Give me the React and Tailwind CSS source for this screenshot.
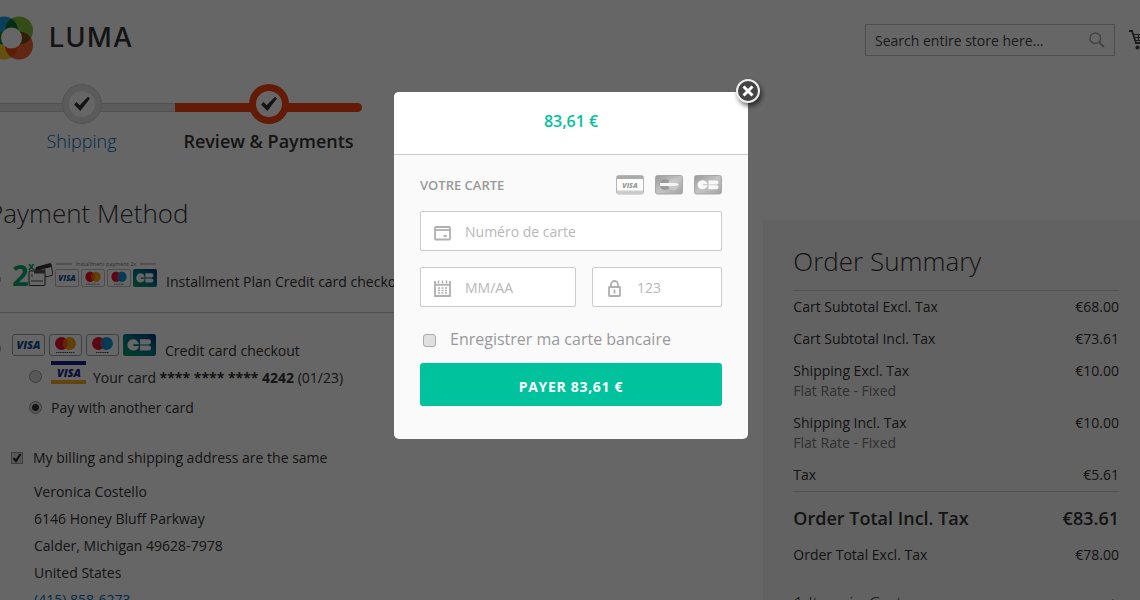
import clsx from 'clsx';

const totals = [
  { label: 'Cart Subtotal Excl. Tax', value: '€68.00' },
  { label: 'Cart Subtotal Incl. Tax', value: '€73.61' },
  { label: 'Shipping Excl. Tax', note: 'Flat Rate - Fixed', value: '€10.00' },
  { label: 'Shipping Incl. Tax', note: 'Flat Rate - Fixed', value: '€10.00' },
  { label: 'Tax', value: '€5.61' },
];

const address = ['Veronica Costello', '6146 Honey Bluff Parkway', 'Calder, Michigan 49628-7978', 'United States'];

const radioClass =
  'h-[13px] w-[13px] shrink-0 appearance-none rounded-full border border-[#999] bg-[#ddd] checked:bg-[radial-gradient(circle,#333_0,#333_3px,#ddd_4px)]';

const fieldClass =
  'flex h-10 min-w-0 items-center gap-3.5 rounded-[2px] border border-[#ccc] bg-white pl-[13px] pr-2 text-[#b0b0b0]';

const fieldInputClass =
  'w-full min-w-0 bg-transparent pt-0.5 text-sm text-[#555] outline-none placeholder:text-[#b8b8b8]';

function Logo() {
  return (
    <a href="#" className="flex items-center gap-[15px] pl-px text-[#333]" aria-label="Luma">
      <svg width="45" height="44" viewBox="0 0 45 44" className="isolate">
        <circle cx="15" cy="14.500" r="14" fill="#1b9fdc" className="mix-blend-multiply" />
        <circle cx="30" cy="14.500" r="14" fill="#84bd3c" className="mix-blend-multiply" />
        <circle cx="15" cy="29.500" r="14" fill="#f5c72c" className="mix-blend-multiply" />
        <circle cx="30" cy="29.500" r="14" fill="#f0622f" className="mix-blend-multiply" />
        <circle cx="22.500" cy="22" r="10.500" fill="#fff" />
      </svg>
      <span className="font-['Inter'] text-[27px] leading-8 font-medium tracking-wider">LUMA</span>
    </a>
  );
}

function Step({ label, active }) {
  return (
    <li className="flex w-[187px] flex-col items-center">
      <div className="grid w-full items-center justify-items-center">
        <div
          className={clsx(
            'col-start-1 row-start-1 mt-1.5 h-[9px] w-full',
            active ? 'rounded-r-full bg-[#f84310]' : 'border-y border-[#ccc] bg-[#e4e4e4]'
          )}
        />
        <span
          className={clsx(
            'col-start-1 row-start-1 flex h-10 w-10 items-center justify-center rounded-full',
            active ? 'bg-[#f84310]' : 'border border-[#ccc] bg-[#e4e4e4]'
          )}
        >
          <span className="flex h-[26px] w-[26px] items-center justify-center rounded-full bg-white">
            <svg width="18" height="16" viewBox="0 0 18 16">
              <path d="M1 8.500 3.500 6l3.200 3.200L15 .8l2 1.600L7.300 15z" fill="#333" />
            </svg>
          </span>
        </span>
      </div>
      <span className={clsx('mt-[3px] text-lg leading-7', active ? 'font-semibold text-[#333]' : 'font-light text-[#006bb4]')}>
        {label}
      </span>
    </li>
  );
}

function CardBadge({ type, small }) {
  return (
    <svg width={small ? 24 : 33} height={small ? 18 : 22} viewBox="0 0 33 22" preserveAspectRatio="none" className="shrink-0">
      <defs>
        <linearGradient id="cbFill" x1="0" y1="1" x2="1" y2="0">
          <stop offset="0" stopColor="#0f9a5e" />
          <stop offset=".5" stopColor="#04768a" />
          <stop offset="1" stopColor="#023a7a" />
        </linearGradient>
      </defs>
      {type !== 'cb' && <rect x=".5" y=".5" width="32" height="21" rx="2.500" fill="#fff" stroke="#a0a0a0" />}
      {type === 'visa' && (
        <text x="16.500" y="15" textAnchor="middle" fontFamily="Open Sans, sans-serif" fontSize="11" fontWeight="800" fontStyle="italic" fill="#0a4f94">
          VISA
        </text>
      )}
      {(type === 'mastercard' || type === 'maestro') && (
        <g>
          <circle cx="12.500" cy="9.500" r="6.500" fill="#e8112d" />
          <circle cx="20.500" cy="9.500" r="6.500" fill={type === 'maestro' ? '#0a97dd' : '#f79e1b'} />
          <path d="M16.500 4.400a6.500 6.500 0 0 1 0 10.200 6.500 6.500 0 0 1 0-10.200z" fill={type === 'maestro' ? '#6b63b0' : '#ff5f00'} />
          <path d={type === 'maestro' ? 'M10 18.500h13' : 'M7 18.500h19'} stroke="#444" strokeDasharray="1.500 .6" />
        </g>
      )}
      {type === 'cb' && (
        <g>
          <rect width="33" height="22" rx="2.500" fill="url(#cbFill)" />
          <path d="M16 10.300h-5.500v1.600H16a5.800 5.800 0 0 1-6 4.600 5.600 5.600 0 0 1 0-11.200 5.800 5.800 0 0 1 6 5z" fill="#fff" />
          <path d="M17 5.300h8.500a2.500 2.500 0 0 1 0 5.100H17zM17 11.500h8.500a2.500 2.500 0 0 1 0 5H17z" fill="#fff" />
        </g>
      )}
    </svg>
  );
}

function InstallmentBadge() {
  return (
    <span className="flex items-end gap-0.5">
      <svg width="41" height="28" viewBox="0 0 41 28">
        <text x="0" y="25" fontFamily="Open Sans, sans-serif" fontSize="29" fontWeight="700" fill="#0aa66c">
          2
        </text>
        <path d="M26 6 39 3l2 11-7 2z" fill="#fff" stroke="#444" />
        <path d="M24 6 38.500 2l.7 4L23 10z" fill="#333" />
        <rect x="17" y="10" width="16" height="14.500" rx="1" fill="#fff" stroke="#333" />
        <path d="M22 8.500h12l-2 4H22z" fill="#555" />
        <path d="M20 13v3M19 20h12" stroke="#555" />
        <text x="16" y="9" fontFamily="Open Sans, sans-serif" fontSize="11" fontWeight="700" fill="#0aa66c">
          x
        </text>
      </svg>
      <span className="flex flex-col gap-0.5">
        <svg width="102" height="6" viewBox="0 0 102 6">
          <path d="M1 3h16" stroke="#999" />
          <path d="M85 3h16" stroke="#c88" />
          <text x="51" y="5" textAnchor="middle" fontFamily="Open Sans, sans-serif" fontSize="5.500" fill="#777">
            Installment payment 2x
          </text>
        </svg>
        <span className="flex gap-0.5 pb-0.5">
          <CardBadge type="visa" small />
          <CardBadge type="mastercard" small />
          <CardBadge type="maestro" small />
          <CardBadge type="cb" small />
        </span>
      </span>
    </span>
  );
}

function VisaCard() {
  return (
    <svg width="35" height="23" viewBox="0 0 35 23" className="shrink-0">
      <rect width="35" height="23" fill="#fff" />
      <rect width="35" height="4" fill="#1a1f8a" />
      <rect y="19" width="35" height="4" fill="#f7a823" />
      <text x="18" y="15.500" textAnchor="middle" fontFamily="Open Sans, sans-serif" fontSize="11" fontWeight="800" fontStyle="italic" fill="#1a1f8a">
        VISA
      </text>
    </svg>
  );
}

function GreyCard({ type }) {
  return (
    <svg width="28" height="20" viewBox="0 0 28 20">
      <defs>
        <linearGradient id="greyFill" x1="0" y1="0" x2="1" y2="1">
          <stop offset="0" stopColor="#999" />
          <stop offset=".5" stopColor="#c4c4c4" />
          <stop offset="1" stopColor="#a3a3a3" />
        </linearGradient>
      </defs>
      {type === 'visa' && (
        <g>
          <rect x=".5" y=".5" width="27" height="18.500" rx="2" fill="#fdfdfd" stroke="#b5b5b5" />
          <path d="M1 1h26v3H1z" fill="#aaa" />
          <path d="M1 15.500h26V19H1z" fill="#ccc" />
          <text x="14" y="12.500" textAnchor="middle" fontFamily="Open Sans, sans-serif" fontSize="7" fontWeight="800" fontStyle="italic" fill="#999">
            VISA
          </text>
        </g>
      )}
      {type !== 'visa' && <rect x=".5" y=".5" width="27" height="18.500" rx="2" fill="url(#greyFill)" stroke="#a8a8a8" />}
      {type === 'mastercard' && (
        <g>
          <circle cx="10" cy="9.500" r="5.500" fill="#999" />
          <circle cx="18.500" cy="9.500" r="5.500" fill="#c8c8c8" />
          <path d="M5 8h16l3 1.500-3 1.500H5z" fill="#f4f4f4" />
        </g>
      )}
      {type === 'cb' && (
        <g fill="#fafafa">
          <path d="M13.500 9.200H9v1h4.500a5 4.500 0 1 1 0-1z" />
          <path d="M14.500 5.500h8a2 2 0 0 1 0 4h-8zM14.500 10.300h8a2 2 0 0 1 0 4h-8z" />
        </g>
      )}
    </svg>
  );
}

function CardIcon() {
  return (
    <svg width="17" height="15" viewBox="0 0 17 15" className="mt-1 shrink-0" fill="none" stroke="currentColor">
      <rect x="1" y="1" width="15" height="12.500" rx="1" strokeWidth="1.800" />
      <path d="M1 4h15" strokeWidth="1.800" />
      <path d="M9.500 10h3.500" strokeWidth="1.800" />
    </svg>
  );
}

function CalendarIcon() {
  return (
    <svg width="17" height="17" viewBox="0 0 17 17" className="mt-0.5 shrink-0" fill="none" stroke="currentColor">
      <path d="M1 1v15h15V1" strokeWidth="1.800" />
      <path d="M1 4.800h15" strokeWidth="1.800" />
      <path d="M4.500 .5v3M8.500 .5v3M12.500 .5v3" strokeWidth="1.500" />
      <path d="M4 8h2M7.500 8h2M11 8h2M4 10.500h2M7.500 10.500h2M11 10.500h2M4 13h2M7.500 13h2M11 13h2" strokeWidth="1.300" />
    </svg>
  );
}

function LockIcon() {
  return (
    <svg width="13" height="17" viewBox="0 0 13 17" className="mx-0.5 mt-0.5 shrink-0" fill="none" stroke="currentColor">
      <rect x="1" y="7" width="11" height="9" rx=".5" strokeWidth="1.800" />
      <path d="M3 7V4.500a3.500 3.500 0 0 1 7 0V7" strokeWidth="1.800" />
      <path d="M6.500 9.500v4" strokeWidth="1.800" />
    </svg>
  );
}

function Header() {
  return (
    <header className="flex items-start justify-between pt-4">
      <Logo />
      <div className="flex items-center gap-3.5 pt-2">
        <form className="flex h-8 w-[250px] items-center border border-[#c2c2c2] bg-white px-[9px]">
          <input
            type="text"
            aria-label="Search"
            placeholder="Search entire store here..."
            className="min-w-0 flex-1 bg-transparent pt-0.5 text-sm outline-none placeholder:text-[#444]"
          />
          <button type="submit" aria-label="Search">
            <svg width="16" height="16" viewBox="0 0 16 16" fill="none" stroke="#a8a8a8">
              <circle cx="6.300" cy="6.300" r="5.300" strokeWidth="1.500" />
              <path d="m10 10 5 5" strokeWidth="1.800" />
            </svg>
          </button>
        </form>
        <a href="#" aria-label="My cart">
          <svg width="22" height="20" viewBox="0 0 22 20" fill="none" stroke="#444">
            <path d="M0 1h3l4 12h11" strokeWidth="1.800" />
            <path d="M4.500 4.500H20l-2 6H6.500M5.500 7.500H19M9.500 4.500v6M13 4.500v6M16.500 4.500v6" strokeWidth="1.200" />
            <circle cx="8.500" cy="17.500" r="2" fill="#444" stroke="none" />
            <circle cx="17" cy="17.500" r="2" fill="#444" stroke="none" />
          </svg>
        </a>
      </div>
    </header>
  );
}

function PaymentMethods() {
  return (
    <main className="w-2/3 pt-px pr-8">
      <h1 className="mb-[30px] text-[26px] leading-9 font-light">Payment Method</h1>

      <label className="flex items-start border-b border-[#ccc] pb-5">
        <input type="radio" name="method" className={clsx(radioClass, 'mt-3 mr-[11px]')} />
        <InstallmentBadge />
        <span className="ml-[9px] pt-[11px] leading-5">Installment Plan Credit card checkout</span>
      </label>

      <label className="flex items-start pt-[21px]">
        <input type="radio" name="method" className={clsx(radioClass, 'mt-2 mr-[11px]')} defaultChecked />
        <span className="flex gap-1">
          <CardBadge type="visa" />
          <CardBadge type="mastercard" />
          <CardBadge type="maestro" />
          <CardBadge type="cb" />
        </span>
        <span className="ml-[9px] pt-[7px] leading-5">Credit card checkout</span>
      </label>

      <div className="flex flex-col gap-1.5 pl-[41px]">
        <label className="flex items-start">
          <input type="radio" name="card" className={clsx(radioClass, 'mt-[9px] mr-[9px]')} />
          <VisaCard />
          <span className="ml-[7px] pt-[7px] leading-5">
            Your card <strong>**** **** **** 4242</strong> (01/23)
          </span>
        </label>
        <label className="flex items-center gap-[9px]">
          <input type="radio" name="card" className={radioClass} defaultChecked />
          <span className="pt-0.5 leading-6">Pay with another card</span>
        </label>
      </div>

      <div className="mt-6 pl-[23px]">
        <label className="flex items-center gap-[10px] leading-7">
          <span className="grid">
            <input
              type="checkbox"
              defaultChecked
              className="peer col-start-1 row-start-1 h-3 w-3 appearance-none border border-[#999] bg-[#ddd]"
            />
            <svg
              width="12"
              height="12"
              viewBox="0 0 12 12"
              className="pointer-events-none invisible col-start-1 row-start-1 peer-checked:visible"
            >
              <path d="m2.500 6 2.500 3 4.500-7" fill="none" stroke="#222" strokeWidth="2" />
            </svg>
          </span>
          My billing and shipping address are the same
        </label>
        <address className="mt-1.5 pl-[23px] leading-[27px] not-italic">
          {address.map((line) => (
            <div key={line}>{line}</div>
          ))}
          <a href="tel:4158586273" className="text-[#006bb4]">
            (415) 858-6273
          </a>
        </address>
      </div>
    </main>
  );
}

function OrderSummary() {
  return (
    <aside className="mt-[26px] w-1/3 bg-[#f5f5f5] pr-8 pb-10 pl-[30px]">
      <h2 className="pt-6 pb-3 text-[26px] leading-[34px] font-light">Order Summary</h2>
      <table className="w-full border-collapse">
        <tbody>
          {totals.map((row, i) => (
            <tr
              key={row.label}
              className={clsx('align-top', i === 0 && 'border-t border-[#ccc]', i === totals.length - 1 && 'border-b border-[#ccc]')}
            >
              <th className="py-1.5 text-left leading-5 font-normal">
                {row.label}
                {row.note && <span className="block text-[#777]">{row.note}</span>}
              </th>
              <td className="py-1.5 text-right leading-5">{row.value}</td>
            </tr>
          ))}
          <tr className="text-lg leading-6 font-semibold">
            <th className="pt-[14px] pb-[9px] text-left font-semibold">Order Total Incl. Tax</th>
            <td className="pt-[14px] pb-[9px] text-right">€83.61</td>
          </tr>
          <tr className="leading-5">
            <th className="py-1.5 text-left font-normal">Order Total Excl. Tax</th>
            <td className="py-1.5 text-right">€78.00</td>
          </tr>
        </tbody>
      </table>
      <button type="button" className="mt-[18px] flex w-full items-center justify-between text-lg leading-7 font-light">
        1 Item in Cart
        <svg width="12" height="8" viewBox="0 0 12 8" fill="none" stroke="#777" strokeWidth="1.500">
          <path d="m1 6 5-5 5 5" />
        </svg>
      </button>
    </aside>
  );
}

function PaymentModal() {
  return (
    <div className="fixed inset-0 flex items-start justify-center bg-black/60 pt-[92px] pl-0.5">
      <div role="dialog" aria-label="Paiement" className="relative w-[354px] rounded-[5px] bg-[#fafafa]">
        <button
          type="button"
          aria-label="Fermer"
          className="absolute -top-[13px] -right-3 flex h-6 w-6 items-center justify-center rounded-full border-2 border-[#eee] bg-[#444] shadow-[2px_3px_5px_rgba(0,0,0,.6)]"
        >
          <svg width="12" height="12" viewBox="0 0 12 12" stroke="#fff" strokeWidth="3">
            <path d="m1.500 1.500 9 9M10.500 1.500l-9 9" />
          </svg>
        </button>

        <div className="rounded-t-[5px] border-b border-[#ccc] bg-white pt-[17px] pb-[21px] text-center text-base leading-6 font-semibold text-[#00c29c]">
          83,61 €
        </div>

        <form className="px-[26px] pt-5 pb-[33px]">
          <div className="flex h-5 items-center justify-between">
            <h3 className="text-[13px] leading-5 font-semibold text-[#999]">VOTRE CARTE</h3>
            <div className="flex gap-[11px]">
              <GreyCard type="visa" />
              <GreyCard type="mastercard" />
              <GreyCard type="cb" />
            </div>
          </div>

          <label className={clsx(fieldClass, 'mt-4')}>
            <CardIcon />
            <input type="text" aria-label="Numéro de carte" placeholder="Numéro de carte" className={fieldInputClass} />
          </label>
          <div className="mt-4 flex gap-4">
            <label className={clsx(fieldClass, 'w-[156px]')}>
              <CalendarIcon />
              <input type="text" aria-label="Date d'expiration" placeholder="MM/AA" className={fieldInputClass} />
            </label>
            <label className={clsx(fieldClass, 'flex-1')}>
              <LockIcon />
              <input type="text" aria-label="Code de sécurité" placeholder="123" className={fieldInputClass} />
            </label>
          </div>

          <label className="mt-5 flex items-center gap-[14px] pl-[3px] text-base leading-6 text-[#999]">
            <input type="checkbox" className="mt-0.5 h-[13px] w-[13px] appearance-none rounded-[3px] border border-[#aaa] bg-[#e0e0e0]" />
            Enregistrer ma carte bancaire
          </label>

          <button
            type="submit"
            className="mt-3 h-[43px] w-full rounded-[3px] bg-[#00c29c] pt-1 text-sm font-bold tracking-wider text-white"
          >
            PAYER 83,61 €
          </button>
        </form>
      </div>
    </div>
  );
}

export default function App() {
  return (
    <div className="h-screen overflow-hidden bg-white font-['Open_Sans',sans-serif] text-sm text-[#333]">
      <div className="-mr-[11px] -ml-3">
        <Header />
        <ol className="mt-6 flex">
          <Step label="Shipping" />
          <Step label="Review & Payments" active />
        </ol>
        <div className="mt-[39px] flex items-start">
          <PaymentMethods />
          <OrderSummary />
        </div>
      </div>
      <PaymentModal />
    </div>
  );
}
